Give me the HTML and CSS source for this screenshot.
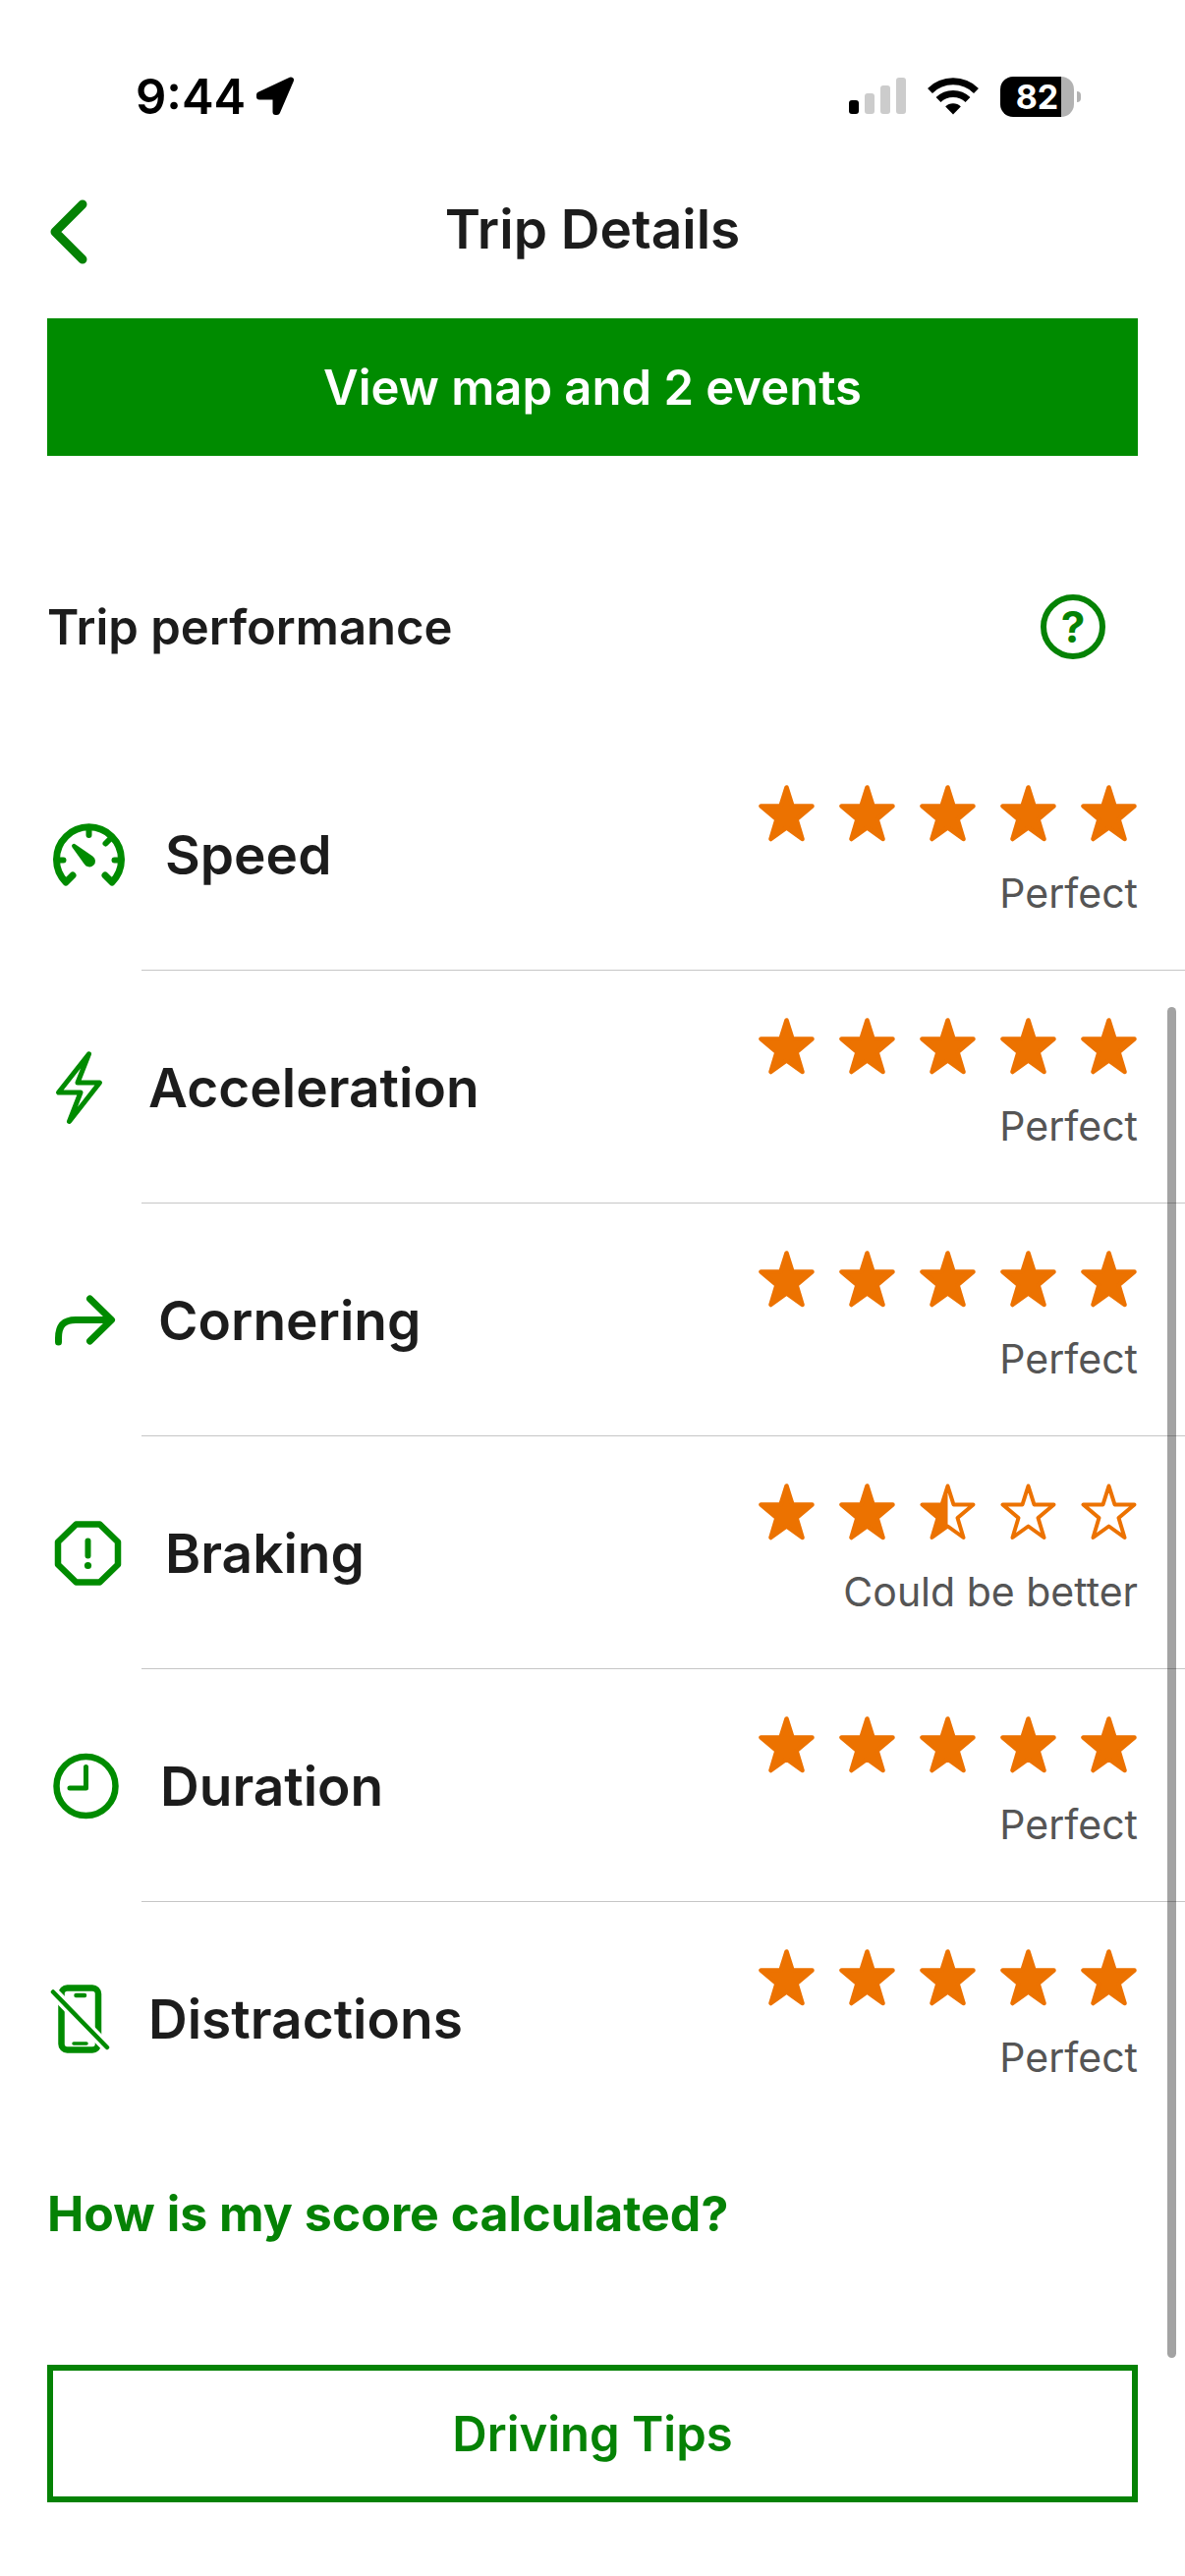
FILE: index.html
```html
<!DOCTYPE html>
<html lang="en">
<head>
    <meta charset="UTF-8">
    <meta name="viewport" content="width=device-width, initial-scale=1.0">
    <title>Trip Details</title>
    <link rel="stylesheet" href="styles.css">
</head>
<body>

<svg class="sprite" aria-hidden="true">
    <symbol id="star-full" viewBox="0 0 58 58">
        <path d="M28.5 2.5L34.5 21.5H54.5L38.5 35L44.5 55L28.5 43.5L12.5 55L18.5 35L2.5 21.5H22.5Z" fill="currentColor" stroke="currentColor" stroke-width="4.5" stroke-linejoin="round"/>
    </symbol>
    <symbol id="star-half" viewBox="0 0 58 58">
        <path d="M28.5 2.5L34.5 21.5H54.5L38.5 35L44.5 55L28.5 43.5L12.5 55L18.5 35L2.5 21.5H22.5Z" fill="none" stroke="currentColor" stroke-width="4" stroke-linejoin="round"/>
        <path d="M28.5 2.5V43.5L12.5 55L18.5 35L2.5 21.5H22.5Z" fill="currentColor"/>
    </symbol>
    <symbol id="star-empty" viewBox="0 0 58 58">
        <path d="M28.5 2.5L34.5 21.5H54.5L38.5 35L44.5 55L28.5 43.5L12.5 55L18.5 35L2.5 21.5H22.5Z" fill="none" stroke="currentColor" stroke-width="4" stroke-linejoin="round"/>
    </symbol>
</svg>

<div class="status-bar">
    <div class="status-left">
        <span class="status-time">9:44</span>
        <svg width="40" height="40" viewBox="0 0 40 40" aria-hidden="true">
            <path d="M36 3.5L4 18.5V20.5H20.5V36H22Z" fill="#000" stroke="#000" stroke-width="6" stroke-linejoin="round"/>
        </svg>
    </div>
    <div class="status-right">
        <svg width="58" height="38" viewBox="0 0 58 38" aria-hidden="true">
            <rect x="0" y="23" width="10" height="14" rx="3" fill="#000"/>
            <rect x="16" y="16" width="10" height="21" rx="3" fill="#ccc"/>
            <rect x="32" y="8" width="10" height="29" rx="3" fill="#ccc"/>
            <rect x="48" y="0" width="10" height="37" rx="3" fill="#ccc"/>
        </svg>
        <svg width="52" height="38" viewBox="0 0 52 38" aria-hidden="true">
            <path d="M2.5 13.5A33.5 33.5 0 0 1 49.5 13.5" fill="none" stroke="#000" stroke-width="7"/>
            <path d="M11 22.5A21.5 21.5 0 0 1 41 22.5" fill="none" stroke="#000" stroke-width="7"/>
            <path d="M26 37.5L18.2 29.5A11 11 0 0 1 33.8 29.5Z" fill="#000"/>
        </svg>
        <div class="battery">
            <span class="battery-level">82</span>
        </div>
    </div>
</div>

<header class="header">
    <button class="back-button" aria-label="Back">
        <svg width="48" height="74" viewBox="0 0 48 74" aria-hidden="true">
            <path d="M36 12L8 40L36 68" fill="none" stroke="currentColor" stroke-width="9" stroke-linecap="round" stroke-linejoin="round"/>
        </svg>
    </button>
    <h1 class="header-title">Trip Details</h1>
</header>

<main class="content">
    <button class="button button-primary">View map and 2 events</button>

    <div class="section-header">
        <h2 class="section-title">Trip performance</h2>
        <button class="help-button" aria-label="About trip performance">?</button>
    </div>

    <ul class="metrics">
        <li class="metric">
            <svg width="84" height="64" viewBox="0 0 84 64" aria-hidden="true">
                <g fill="none" stroke="currentColor" stroke-width="7" stroke-linecap="round" stroke-linejoin="round">
                    <path d="M26 53L19 60A33 33 0 1 1 66 60L59 53"/>
                    <path d="M42.5 6V12M10 37.5H16.5M75 37.5H68.5M64 16L59.5 20.5" stroke-width="6"/>
                </g>
                <path d="M28.5 21.2L46.3 33.4A6 6 0 1 1 37.8 41.4L25.4 24.2A2.2 2.2 0 0 1 28.5 21.2Z" fill="currentColor"/>
            </svg>
            <span class="metric-name">Speed</span>
            <div class="rating">
                <div class="stars">
                    <svg class="star"><use href="#star-full"/></svg>
                    <svg class="star"><use href="#star-full"/></svg>
                    <svg class="star"><use href="#star-full"/></svg>
                    <svg class="star"><use href="#star-full"/></svg>
                    <svg class="star"><use href="#star-full"/></svg>
                </div>
                <span class="rating-text">Perfect</span>
            </div>
        </li>
        <li class="metric">
            <svg width="67" height="76" viewBox="0 0 67 76" aria-hidden="true">
                <path d="M42.5 3.8L11.5 43H34L22.5 72.5L53.5 33H31Z" fill="none" stroke="currentColor" stroke-width="5" stroke-linejoin="round"/>
            </svg>
            <span class="metric-name">Acceleration</span>
            <div class="rating">
                <div class="stars">
                    <svg class="star"><use href="#star-full"/></svg>
                    <svg class="star"><use href="#star-full"/></svg>
                    <svg class="star"><use href="#star-full"/></svg>
                    <svg class="star"><use href="#star-full"/></svg>
                    <svg class="star"><use href="#star-full"/></svg>
                </div>
                <span class="rating-text">Perfect</span>
            </div>
        </li>
        <li class="metric">
            <svg width="77" height="52" viewBox="0 0 77 52" aria-hidden="true">
                <path d="M11.5 48V44C11.5 30 18 25.5 29 25.5H65M43.5 4L65.5 25.5L43.5 47" fill="none" stroke="currentColor" stroke-width="7" stroke-linecap="round" stroke-linejoin="round"/>
            </svg>
            <span class="metric-name">Cornering</span>
            <div class="rating">
                <div class="stars">
                    <svg class="star"><use href="#star-full"/></svg>
                    <svg class="star"><use href="#star-full"/></svg>
                    <svg class="star"><use href="#star-full"/></svg>
                    <svg class="star"><use href="#star-full"/></svg>
                    <svg class="star"><use href="#star-full"/></svg>
                </div>
                <span class="rating-text">Perfect</span>
            </div>
        </li>
        <li class="metric">
            <svg width="84" height="66" viewBox="0 0 84 66" aria-hidden="true">
                <path d="M29.5 3.5H53.5L72 21.5V44.5L53.5 62.5H29.5L11 44.5V21.5Z" fill="none" stroke="currentColor" stroke-width="6.5" stroke-linejoin="round"/>
                <path d="M41.5 20.5V35.5" stroke="currentColor" stroke-width="6" stroke-linecap="round"/>
                <circle cx="41.5" cy="45.5" r="3.6" fill="currentColor"/>
            </svg>
            <span class="metric-name">Braking</span>
            <div class="rating">
                <div class="stars">
                    <svg class="star"><use href="#star-full"/></svg>
                    <svg class="star"><use href="#star-full"/></svg>
                    <svg class="star"><use href="#star-half"/></svg>
                    <svg class="star"><use href="#star-empty"/></svg>
                    <svg class="star"><use href="#star-empty"/></svg>
                </div>
                <span class="rating-text">Could be better</span>
            </div>
        </li>
        <li class="metric">
            <svg width="79" height="68" viewBox="0 0 79 68" aria-hidden="true">
                <circle cx="39.5" cy="34" r="30" fill="none" stroke="currentColor" stroke-width="6.5"/>
                <path d="M39.5 14.5V36H23" fill="none" stroke="currentColor" stroke-width="5" stroke-linecap="round" stroke-linejoin="round"/>
            </svg>
            <span class="metric-name">Duration</span>
            <div class="rating">
                <div class="stars">
                    <svg class="star"><use href="#star-full"/></svg>
                    <svg class="star"><use href="#star-full"/></svg>
                    <svg class="star"><use href="#star-full"/></svg>
                    <svg class="star"><use href="#star-full"/></svg>
                    <svg class="star"><use href="#star-full"/></svg>
                </div>
                <span class="rating-text">Perfect</span>
            </div>
        </li>
        <li class="metric">
            <svg width="67" height="72" viewBox="0 0 67 72" aria-hidden="true">
                <g fill="none" stroke="currentColor" stroke-linecap="round">
                    <rect x="14.5" y="4.5" width="37.5" height="63" rx="6" stroke-width="6.5"/>
                    <path d="M29.5 12H38" stroke-width="4.5"/>
                    <path d="M27 61H40" stroke-width="3.5"/>
                    <path d="M6 8.5L61 65" stroke="#fff" stroke-width="11"/>
                    <path d="M6 8.5L61 65" stroke-width="4.5"/>
                </g>
            </svg>
            <span class="metric-name">Distractions</span>
            <div class="rating">
                <div class="stars">
                    <svg class="star"><use href="#star-full"/></svg>
                    <svg class="star"><use href="#star-full"/></svg>
                    <svg class="star"><use href="#star-full"/></svg>
                    <svg class="star"><use href="#star-full"/></svg>
                    <svg class="star"><use href="#star-full"/></svg>
                </div>
                <span class="rating-text">Perfect</span>
            </div>
        </li>
    </ul>

    <a class="score-link" href="#">How is my score calculated?</a>

    <button class="button button-outline">Driving Tips</button>
</main>

<div class="scroll-indicator"></div>

</body>
</html>
```
FILE: styles.css
```css
* {
    box-sizing: border-box;
}

body {
    margin: 0;
    position: relative;
    background-color: #fff;
    color: #1c1c1c;
    font-family: Inter, "Liberation Sans", sans-serif;
}

button {
    font-family: inherit;
    cursor: pointer;
}

svg {
    display: block;
    flex-shrink: 0;
}

.sprite {
    position: absolute;
    width: 0;
    height: 0;
}

/* Status bar */
.status-bar {
    display: flex;
    align-items: center;
    justify-content: space-between;
    height: 196px;
    padding: 0 113px 0 138px;
    color: #000;
}

.status-left {
    display: flex;
    align-items: center;
    gap: 10px;
}

.status-time {
    font-size: 49px;
    font-weight: 600;
}

.status-right {
    display: flex;
    align-items: center;
    gap: 22px;
}

.battery {
    position: relative;
    display: flex;
    align-items: center;
    justify-content: center;
    width: 75px;
    height: 41px;
    border-radius: 13px;
    background: linear-gradient(to right, #000 62px, #b2b2b2 62px);
}

.battery::after {
    content: "";
    position: absolute;
    top: 15px;
    right: -7px;
    width: 4px;
    height: 11px;
    border-radius: 0 4px 4px 0;
    background-color: #b2b2b2;
}

.battery-level {
    color: #fff;
    font-size: 34px;
    font-weight: 700;
}

/* Header */
.header {
    display: grid;
    grid-template-columns: 1fr auto 1fr;
    align-items: center;
    height: 74px;
    margin-bottom: 54px;
    padding: 0 48px;
}

.back-button {
    justify-self: start;
    padding: 0;
    border: none;
    background: none;
    color: #058205;
}

.header-title {
    margin: 0;
    font-size: 55px;
    font-weight: 600;
}

/* Content */
.content {
    display: flex;
    flex-direction: column;
    padding: 0 48px 74px;
}

.button {
    width: 100%;
    height: 140px;
    font-size: 49px;
    font-weight: 600;
}

.button-primary {
    border: none;
    background-color: #008b00;
    color: #fff;
}

.button-outline {
    border: 6px solid #058205;
    background-color: #fff;
    color: #058205;
}

.section-header {
    display: flex;
    align-items: center;
    justify-content: space-between;
    margin: 141px 0 80px;
    padding-right: 33px;
}

.section-title {
    margin: 0;
    font-size: 49px;
    font-weight: 600;
}

.help-button {
    display: flex;
    align-items: center;
    justify-content: center;
    width: 66px;
    height: 66px;
    padding: 0;
    border: 6px solid #058205;
    border-radius: 50%;
    background: none;
    color: #058205;
    font-size: 44px;
    font-weight: 700;
}

.metrics {
    margin: 0 -48px;
    padding: 0;
    list-style: none;
}

.metric {
    position: relative;
    display: flex;
    align-items: center;
    gap: 36px;
    height: 237px;
    padding: 0 48px;
    color: #008b00;
}

.metric:not(:last-child)::after {
    content: "";
    position: absolute;
    right: 0;
    bottom: 0;
    left: 144px;
    height: 1px;
    background-color: #c6c6c6;
}

.metric-name {
    color: #1c1c1c;
    font-size: 55px;
    font-weight: 600;
}

.rating {
    display: flex;
    flex-direction: column;
    align-items: flex-end;
    gap: 27px;
    margin-left: auto;
    padding-bottom: 7px;
}

.stars {
    display: flex;
    gap: 24px;
    color: #ec7200;
}

.star {
    width: 58px;
    height: 58px;
}

.rating-text {
    color: #555;
    font-size: 41px;
    line-height: 50px;
}

.score-link {
    align-self: flex-start;
    margin: 50px 0 124px;
    color: #058205;
    font-size: 50px;
    font-weight: 700;
    line-height: 60px;
    text-decoration: none;
}

.scroll-indicator {
    position: absolute;
    top: 1025px;
    right: 9px;
    width: 9px;
    height: 1375px;
    border-radius: 5px;
    background-color: rgba(0, 0, 0, 0.36);
}
```
